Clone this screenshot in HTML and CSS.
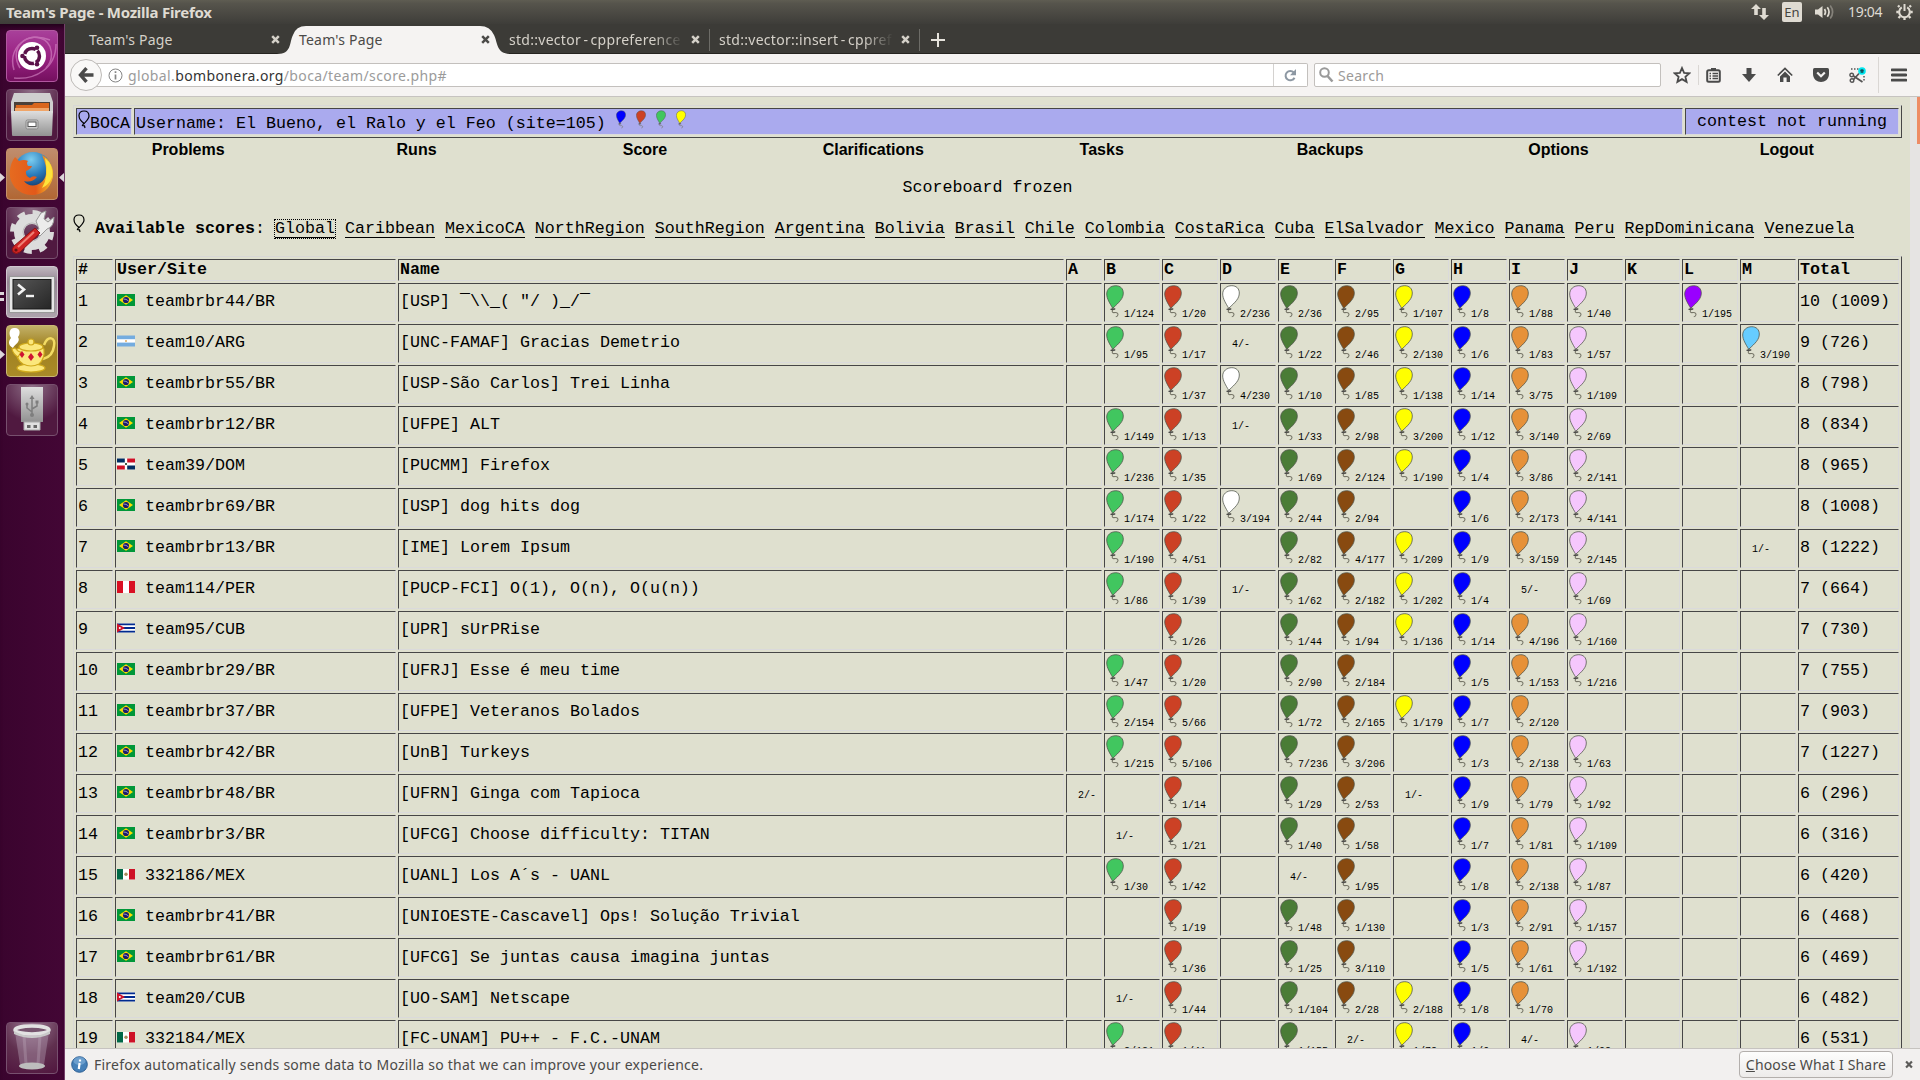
FILE: index.html
```html
<!DOCTYPE html>
<html lang="en">
<head>
<meta charset="utf-8">
<title>Team's Page</title>
<link rel="stylesheet" href="styles.css">
</head>
<body>
<svg class="defs" width="0" height="0" aria-hidden="true">
  <defs>
    <symbol id="balloon" viewBox="0 0 18 33">
      <path d="M4.8 24.9L7.2 22.9L9.4 24.3M7 24.6C5.8 26 6 27.7 7.8 27.6C10.300 27.200 12 27.700 12 29.500C12 31.100 10.800 31.600 9.800 31.800" fill="none" stroke="#777668" stroke-width="1.1"/>
      <path d="M9.8 .7C14.300 .7 17.300 3.600 17.300 8C17.300 13.500 13.500 17 6.700 23.300C4 18.500 .7 13.800 .7 9C.7 4 4.700 .7 9.800 .7Z" stroke="#4c5148" stroke-opacity=".75" stroke-width="1"/>
      <path d="M4.600 24.300H8.800" stroke="#444" stroke-width="1.200"/>
    </symbol>
    <symbol id="outline" viewBox="0 0 12 19">
      <path d="M6 1C9 1 11 3 11 6C11 9 8 11.500 6.200 13.500C4 12 1 8.500 1 5.500C1 2.500 3 1 6 1ZM5.500 13.500L4.500 15.500L6.500 15.800L7 18" fill="none" stroke="#000" stroke-width="1.200"/>
    </symbol>
    <symbol id="BR" viewBox="0 0 18 12"><path fill="#009739" d="M0 0h18v12H0z"/><path fill="#fedd00" d="M9 1.300L16 6L9 10.700L2 6Z"/><circle cx="9" cy="6" r="3.100" fill="#1c1a6b"/><path d="M6.300 5Q9 4.700 11.600 7" stroke="#c8cbe8" stroke-width=".7" fill="none"/></symbol>
    <symbol id="ARG" viewBox="0 0 18 12"><path fill="#74acdf" d="M0 .5h18v11H0z"/><path fill="#fff" d="M0 4.200h18v3.400H0z"/><path fill="#e8bf85" d="M8 5h2v2H8z"/></symbol>
    <symbol id="DOM" viewBox="0 0 18 12"><path fill="#fff" d="M0 .5h18v11H0z"/><path fill="#002d62" d="M0 .5h7.800v4H0zM10.200 7.500H18v4h-7.800z"/><path fill="#ce1126" d="M10.200 .5H18v4h-7.800zM0 7.500h7.800v4H0z"/><path fill="#3d5c46" d="M8 5h2v2H8z"/></symbol>
    <symbol id="PER" viewBox="0 0 18 12"><path fill="#fff" d="M0 0h18v12H0z"/><path fill="#d91023" d="M0 0h6v12H0zM12 0h6v12h-6z"/></symbol>
    <symbol id="CUB" viewBox="0 0 18 12"><path fill="#fff" d="M0 1.500h18v9H0z"/><path fill="#002a8f" d="M0 1.500h18v1.800H0zM0 5.100h18v1.800H0zM0 8.700h18v1.800H0z"/><path fill="#cf142b" d="M0 1.500L8 6L0 10.500Z"/><circle cx="2.800" cy="6" r="1" fill="#fff"/></symbol>
    <symbol id="MEX" viewBox="0 0 18 12"><path fill="#fff" d="M0 1h18v10.500H0z"/><path fill="#006847" d="M0 1h6v10.500H0z"/><path fill="#ce1126" d="M12 1h6v10.500h-6z"/><circle cx="9" cy="6.200" r="1.700" fill="#a88a5c"/></symbol>
    <symbol id="cross" viewBox="0 0 9 9"><path d="M1.200 1.200L7.800 7.800M7.800 1.200L1.200 7.800" stroke="currentColor" stroke-width="2.500"/></symbol>
    <linearGradient id="metal" x1="0" y1="0" x2="0" y2="1"><stop offset="0" stop-color="#dedede"/><stop offset="1" stop-color="#929292"/></linearGradient>
    <linearGradient id="dark" x1="0" y1="0" x2="1" y2="1"><stop offset="0" stop-color="#565656"/><stop offset="1" stop-color="#262626"/></linearGradient>
    <linearGradient id="fox" x1="0" y1="0" x2="1" y2="0"><stop offset="0" stop-color="#e66b20"/><stop offset=".6" stop-color="#e2591a"/><stop offset="1" stop-color="#f8c62a"/></linearGradient>
    <radialGradient id="globe" cx=".45" cy=".2" r=".8"><stop offset="0" stop-color="#7ccdf0"/><stop offset=".5" stop-color="#2a7dbd"/><stop offset="1" stop-color="#12305f"/></radialGradient>
  </defs>
</svg>

<header class="panel">
  <span class="panel-title">Team's Page - Mozilla Firefox</span>
  <div class="indicators">
    <svg width="18" height="18" viewBox="0 0 18 18" fill="#dfdbd2"><path d="M5 1L10 6H6.800V12H3.200V6H0ZM13 17L8 12H11.200V5H14.800V12H18Z"/></svg>
    <span class="lang">En</span>
    <svg width="20" height="18" viewBox="0 0 20 18" fill="none" stroke="#dfdbd2" stroke-width="1.700"><path d="M0 6.500H3L7.500 3V15L3 11.500H0Z" fill="#dfdbd2" stroke="none"/><path d="M9.500 6Q11.500 9 9.500 12M12.300 4.300Q15.800 9 12.300 13.700"/><path d="M15.200 2.500Q20 9 15.200 15.500" stroke="#85827a"/></svg>
    <span class="clock">19:04</span>
    <svg width="17" height="18" viewBox="0 0 17 18" fill="none" stroke="#dfdbd2"><path d="M5.800 4.400A5.300 5.300 0 1 0 11.200 4.400" stroke-width="2"/><path d="M8.500 1V8" stroke-width="2"/><path d="M3.500 4L2 2.500M13.500 4L15 2.500M2.800 9H.3M14.200 9H16.700M4.200 13.200L2.500 15M12.800 13.200L14.500 15M8.500 14.500V17" stroke-width="2.300"/></svg>
  </div>
</header>

<div class="desktop">
  <nav class="launcher">
    <div class="tile dash"><svg viewBox="0 0 52 52"><g fill="none" stroke="#d98cc9" stroke-width="1.500" opacity=".6"><path d="M8 40C2 20 18 4 34 8C48 12 48 30 40 38"/><path d="M44 10C20 0 2 18 14 38"/><path d="M8 48C30 50 50 38 50 14"/></g><circle cx="26" cy="26" r="14" fill="#fff"/><circle cx="26" cy="26" r="7.500" fill="none" stroke="#5b124a" stroke-width="3.400" stroke-dasharray="13.700 2" stroke-dashoffset="6"/><g fill="#5b124a"><circle cx="16.500" cy="26" r="2.300"/><circle cx="31" cy="17.800" r="2.300"/><circle cx="31" cy="34.200" r="2.300"/></g></svg></div>
    <div class="tile files"><svg viewBox="0 0 52 52"><path d="M8 4H44L47 13V24H5V13Z" fill="#cfcfcf"/><path d="M8 13H44V24H8Z" fill="#4b4039"/><path d="M10 16H26L28 14H43V24H9Z" fill="#d9661d"/><path d="M9 19H43V24H9Z" fill="#f0a568"/><path d="M5 22H47L46 46Q46 47 45 47H7Q6 47 6 46Z" fill="url(#metal)"/><rect x="20" y="31" width="12" height="9" rx="1.500" fill="#ccc" stroke="#888"/><rect x="22" y="33" width="8" height="4.500" fill="#fff" stroke="#555"/></svg></div>
    <div class="tile firefox"><svg viewBox="0 0 52 52"><circle cx="27" cy="23" r="19" fill="url(#globe)"/><path d="M4 22C5 15 7 12 9 9L13 13Q18 11 22 13Q20 15 22 18H26Q25 21 20 23Q19 28 24 30Q27 27 31 29Q26 35 18 33C23 41 38 38 40 26C41 18 38 12 36 7C44 11 48 20 47 29C44 42 35 47 26 47C12 47 2 35 4 22Z" fill="url(#fox)"/><path d="M39 10Q48 17 46 29Q43 37 36 40Q43 29 39 10Z" fill="#fde33b"/></svg></div>
    <div class="tile settings"><svg viewBox="0 0 52 52"><circle cx="26" cy="25" r="18.500" fill="none" stroke="#dadada" stroke-width="7" stroke-dasharray="7.300 7.230"/><circle cx="26" cy="25" r="13" fill="none" stroke="#dcdcdc" stroke-width="10"/><circle cx="26" cy="25" r="9" fill="none" stroke="#bbb"/><path d="M33 22L30 14L35 6L40 4L38 12L42 15L48 10Q48 20 41 22L34 29L28 24Z" fill="#ececec" stroke="#999"/><path d="M29 21L34 26L14 45Q10 48 7 45Q5 42 8 39Z" fill="#cf2424" stroke="#8d1414"/><path d="M28 25L12 40" stroke="#ef8276" stroke-width="2"/><circle cx="10" cy="43" r="1.600" fill="#611"/></svg></div>
    <div class="tile terminal"><svg viewBox="0 0 52 52"><rect x="3.500" y="10.500" width="45" height="36" fill="#e6e6e6" stroke="#999"/><rect x="7" y="13.500" width="38" height="29.500" fill="url(#dark)" stroke="#181818"/><path d="M12 18.500L18 23.500L12 28.500" fill="none" stroke="#f2f2f2" stroke-width="2.600"/><path d="M20 30H28" stroke="#f2f2f2" stroke-width="2.400"/></svg></div>
    <div class="tile lamp"><svg viewBox="0 0 52 52"><path d="M7 23C1 20 3 15 5 13C2 8 4 3 8 3C14 2 15 8 12 12C15 17 9 19 7 23Z" fill="#fff"/><g fill="#fbe77c" stroke="#d0a91c" stroke-width="1.200"><ellipse cx="25" cy="43" rx="14" ry="4"/><path d="M38 20C42 10 50 12 48 21C47 30 41 33 37 34" fill="none" stroke="#f2db63" stroke-width="2.500"/><path d="M11 24Q9 34 17 39Q25 43 33 39Q39 34 38 24Q25 17 11 24Z"/><path d="M12 32Q7 29 6 24L9 23Q12 27 15 27Z"/><ellipse cx="25" cy="22" rx="12" ry="4"/><circle cx="25" cy="17" r="3"/></g><g fill="#cf1432"><path d="M16 26L18.500 29.500L16 33L13.500 29.500Z"/><path d="M25 28L28 32L25 36L22 32Z"/><path d="M34 26L36.500 29.500L34 33L31.500 29.500Z"/></g></svg></div>
    <div class="tile usb"><svg viewBox="0 0 52 52"><path d="M15 3H37V38H15Z" fill="url(#metal)"/><path d="M18 38H34V46H18Z" fill="#e1e1e1" stroke="#aaa"/><path d="M21 41h3.500v3H21zM27.500 41H31v3H27.500z" fill="#666"/><g fill="none" stroke="#7e7e7e" stroke-width="1.500"><path d="M26 14V31M26 28L21 24V20M26 25L31 22V18"/></g><path d="M26 11L28.500 15H23.500Z" fill="#7e7e7e"/><circle cx="26" cy="31" r="2" fill="#7e7e7e"/><circle cx="21" cy="20" r="1.500" fill="#7e7e7e"/><path d="M29.500 16.500h3v3h-3z" fill="#7e7e7e"/></svg></div>
    <div class="tile trash"><svg viewBox="0 0 52 52"><path d="M9 10L14 43Q26 49 38 43L43 10Z" fill="#b9a5b8" opacity=".4"/><path d="M18 14L20 42M34 14L32 42" stroke="#cfc2cf" stroke-width="3" opacity=".25"/><ellipse cx="26" cy="44" rx="13" ry="3.500" fill="#bdbdbd"/><ellipse cx="26" cy="8" rx="17" ry="4" fill="#77556f" stroke="#e2e2e2" stroke-width="3.500"/><path d="M8 9Q26 19 44 9V12Q26 20 8 12Z" fill="#c9c9c9"/></svg></div>
  </nav>

  <main class="window">
    <div class="tabs">
      <div class="tab"><span>Team's Page</span><svg class="close"><use href="#cross"/></svg></div>
      <div class="tab active">
        <svg class="shape" width="234" height="28" viewBox="0 0 234 28"><path d="M0 28C15 28 12 17 16 9Q19 0 29 0H203Q213 0 217 9C221 17 219 28 234 28Z" fill="#f5f3f2"/></svg>
        <span>Team's Page</span><svg class="close"><use href="#cross"/></svg></div>
      <div class="tab ruled"><span class="fade">std::vector - cppreference</span><svg class="close"><use href="#cross"/></svg></div>
      <div class="tab ruled"><span class="fade">std::vector::insert - cppref</span><svg class="close"><use href="#cross"/></svg></div>
      <svg class="plus" width="14" height="14" viewBox="0 0 14 14"><path d="M7 0V14M0 7H14" stroke="#e6e3dc" stroke-width="2"/></svg>
    </div>

    <div class="toolbar">
      <div class="back"><svg width="16" height="16" viewBox="0 0 16 16" fill="none" stroke="#4a4a4a" stroke-width="3.400"><path d="M8.500 1.200L2.500 8L8.500 14.800M2.500 8H15.500"/></svg></div>
      <div class="url">
        <svg width="15" height="15" viewBox="0 0 15 15" fill="none" stroke="#858585"><circle cx="7.500" cy="7.500" r="6.500"/><path d="M7.500 3.300V5M7.500 6.500V11.500" stroke-width="1.700"/></svg>
        <span class="address">global.<b>bombonera.org</b>/boca/team/score.php#</span>
        <span class="reload"><svg width="13" height="13" viewBox="0 0 13 13" fill="none"><path d="M9.800 3.500A4.700 4.700 0 1 0 10.500 8.700" stroke="#8d98a3" stroke-width="2"/><path d="M12 0V6.200H6Z" fill="#8d98a3"/></svg></span>
      </div>
      <div class="search"><svg width="15" height="16" viewBox="0 0 15 16" fill="none" stroke="#9a9a9a"><circle cx="5.500" cy="5.500" r="4.300" stroke-width="2"/><path d="M8.500 9L13.500 14.500" stroke-width="2.600"/></svg><span>Search</span></div>
      <div class="tools">
        <svg width="18" height="18" viewBox="0 0 18 18"><path d="M9 2L11.100 6.800L16.300 7.300L12.400 10.700L13.600 15.800L9 13.100L4.400 15.800L5.600 10.700L1.700 7.300L6.900 6.800Z" fill="none" stroke="#4a4a4a" stroke-width="1.800"/></svg>
        <i class="rule small"></i>
        <svg class="clip" width="15" height="16" viewBox="0 0 15 16"><path d="M5 3V1H10V3" fill="#4a4a4a"/><rect x="1.200" y="3.200" width="12.600" height="11.600" rx="1.500" fill="none" stroke="#4a4a4a" stroke-width="2"/><path d="M3.500 6.500H5M6.500 6.500H12M3.500 9H5M6.500 9H12M3.500 11.500H5M6.500 11.500H12" stroke="#4a4a4a" stroke-width="1.300"/></svg>
        <svg width="16" height="16" viewBox="0 0 16 16"><path d="M5.500 1H10.500V7H15L8 15L1 7H5.500Z" fill="#4a4a4a"/></svg>
        <svg width="16" height="16" viewBox="0 0 16 16"><path d="M.8 8.500L8 1.500L15.200 8.500" fill="none" stroke="#4a4a4a" stroke-width="1.700"/><path d="M3 9.500L8 4.600L13 9.500V15H9.600V10.500H6.400V15H3Z" fill="#4a4a4a"/></svg>
        <svg width="16" height="16" viewBox="0 0 16 16"><path d="M1.500 1H14.500Q16 1 16 2.500V7C16 12 12 15 8 15S0 12 0 7V2.500Q0 1 1.500 1Z" fill="#4a4a4a"/><path d="M4.200 5.500L8 9.200L11.800 5.500" fill="none" stroke="#f4f2f1" stroke-width="2.200"/></svg>
        <svg width="17" height="17" viewBox="0 0 17 17" fill="none"><path d="M2 2H11M15 9V14" stroke="#555" stroke-width="1.500" stroke-dasharray="1.500 1.500"/><circle cx="2.700" cy="8" r="1.800" stroke="#555" stroke-width="1.400"/><circle cx="3" cy="13.500" r="1.800" stroke="#555" stroke-width="1.400"/><path d="M4.500 9L13.500 15M4.500 12.500L10 6.500" stroke="#555" stroke-width="1.800"/><circle cx="13" cy="4" r="3.800" fill="#00e8f0"/><path d="M13 2V6M11.300 3L14.700 5M14.700 3L11.300 5" stroke="#134a55" stroke-width="1.200"/></svg>
        <i class="rule"></i>
        <svg width="16" height="14" viewBox="0 0 16 14"><path d="M1 1.800H15M1 7H15M1 12.200H15" stroke="#4a4a4a" stroke-width="2.800" stroke-linecap="round"/></svg>
      </div>
    </div>

    <div class="viewport">
      <div class="page">
        <div class="banner">
          <div class="cell brand"><svg width="12" height="19"><use href="#outline"/></svg>BOCA</div>
          <div class="cell user">Username: El Bueno, el Ralo y el Feo (site=105)<span class="won"><svg fill="#0000ff"><use href="#balloon"/></svg><svg fill="#cc4125"><use href="#balloon"/></svg><svg fill="#41c65f"><use href="#balloon"/></svg><svg fill="#ffff00"><use href="#balloon"/></svg></span></div>
          <div class="cell status">contest not running</div>
        </div>
        <nav class="menu"><a>Problems</a><a>Runs</a><a>Score</a><a>Clarifications</a><a>Tasks</a><a>Backups</a><a>Options</a><a>Logout</a></nav>
        <p class="frozen">Scoreboard frozen</p>
        <div class="scores"><svg width="12" height="19"><use href="#outline"/></svg><span><b>Available scores</b>:</span><a class="current">Global</a><a>Caribbean</a><a>MexicoCA</a><a>NorthRegion</a><a>SouthRegion</a><a>Argentina</a><a>Bolivia</a><a>Brasil</a><a>Chile</a><a>Colombia</a><a>CostaRica</a><a>Cuba</a><a>ElSalvador</a><a>Mexico</a><a>Panama</a><a>Peru</a><a>RepDominicana</a><a>Venezuela</a></div>
        <div class="board" id="board"></div>
      </div>
      <div class="scrollbar"><div class="thumb"></div></div>
    </div>

    <footer class="notice">
      <svg width="17" height="17" viewBox="0 0 17 17"><circle cx="8.500" cy="8.500" r="7.800" fill="#4580b8" stroke="#2d5f94"/><ellipse cx="8.500" cy="5" rx="6" ry="4" fill="#86b2da" opacity=".6"/><path d="M9 3.500V5.500M8.600 7L7.800 13" stroke="#fff" stroke-width="2.200"/></svg>
      <span class="message">Firefox automatically sends some data to Mozilla so that we can improve your experience.</span>
      <button><u>C</u>hoose What I Share</button>
      <svg class="close"><use href="#cross"/></svg>
    </footer>
  </main>
  <svg class="pips" width="64" height="420" viewBox="0 0 64 420" fill="#dcd6da"><path d="M0 145L5 149.500L0 154ZM64 145L59 149.500L64 154ZM0 264H4V267H0ZM0 270H4V273H0ZM0 322L5 326.500L0 331Z"/></svg>
</div>
<script src="board.js"></script>
</body>
</html>
```
FILE: styles.css
```css
* { box-sizing: border-box; }
body {
  margin: 0;
  width: 1920px;
  height: 1080px;
  overflow: hidden;
  display: flex;
  flex-direction: column;
  font-family: "Noto Sans", sans-serif;
  font-size: 14px;
}
svg { display: block; flex: none; }
.defs { position: absolute; }

.panel {
  height: 24px;
  flex: none;
  display: flex;
  justify-content: space-between;
  padding: 0 7px 0 6px;
  background: linear-gradient(#5f5d52, #56544c 15%, #3e3d39);
  color: #dfdbd2;
  line-height: 24px;
}
.panel-title { font-weight: bold; font-size: 15px; letter-spacing: -.25px; }
.indicators { display: flex; align-items: center; }
.lang {
  margin: 0 13px 0 13px;
  width: 20px;
  height: 20px;
  border-radius: 2px;
  background: #dfdbd2;
  color: #45443f;
  font-size: 13px;
  line-height: 21px;
  text-align: center;
}
.clock { margin: 0 12px 0 13px; width: 36px; white-space: nowrap; letter-spacing: -.3px; }

.desktop { flex: 1; min-height: 0; display: flex; position: relative; }
.launcher {
  width: 65px;
  flex: none;
  display: flex;
  flex-direction: column;
  gap: 7px;
  padding: 6px 6px 6px;
  background: linear-gradient(90deg, #3a042e, #430635);
  border-right: 1px solid #75406a;
  box-shadow: inset 0 6px 5px -3px #22021b;
}
.tile {
  width: 52px;
  height: 52px;
  flex: none;
  border-radius: 4px;
  border: 1px solid #77506e;
  background: radial-gradient(circle at 50% 0, #9b7a94, #60304f 55%, #51163f);
}
.tile svg { width: 52px; height: 52px; margin: -1px; }
.dash { background: linear-gradient(#a8409a, #9a2283 50%, #75105f); border-color: #b157a0; }
.firefox { background: linear-gradient(#c08d6d, #b16734); border-color: #c3906a; }
.terminal { background: linear-gradient(#bfb6be, #958493 30%, #ada2ac); border-color: #cfc6ce; }
.lamp { background: linear-gradient(#c2b068, #a08220 40%, #a98a28); border-color: #c9b774; }
.files, .settings, .usb { background: radial-gradient(circle at 50% 0, #8f7088, #501940 65%); }
.trash { margin-top: auto; }
.pips { position: absolute; left: 0; top: 4px; }

.window { flex: 1; min-width: 0; display: flex; flex-direction: column; }
.tabs {
  height: 30px;
  flex: none;
  display: flex;
  padding-left: 15px;
  background: #3c3b37;
  border-bottom: 1px solid #252420;
  color: #d5d1c9;
}
.tab {
  position: relative;
  width: 210px;
  height: 31px;
  display: flex;
  align-items: center;
  justify-content: space-between;
  padding: 0 10px 0 9px;
  line-height: 32px;
  white-space: nowrap;
  letter-spacing: .2px;
}
.tab > span { position: relative; }
.tab .fade { width: 174px; letter-spacing: .28px; word-spacing: -1.500px; mask-image: linear-gradient(90deg, #000 83%, transparent); }
.tab.active { color: #4b4a48; }
.tab.ruled::after {
  content: "";
  position: absolute;
  right: 0;
  top: 5px;
  height: 22px;
  width: 1px;
  background: #6d6c67;
}
.shape { position: absolute; left: -13px; top: 2px; }
.close { position: relative; width: 9px; height: 9px; }
.plus { margin: 9px 0 0 11px; }

.toolbar {
  height: 43px;
  flex: none;
  display: flex;
  align-items: center;
  padding-left: 5px;
  background: #f5f3f2;
  border-bottom: 1px solid #c6c3c0;
}
.back {
  width: 32px;
  height: 32px;
  flex: none;
  border: 1px solid #bdbab7;
  border-radius: 50%;
  background: #f9f8f7;
  display: grid;
  place-items: center;
  position: relative;
}
.url {
  width: 1214px;
  height: 24px;
  flex: none;
  margin-left: -8px;
  padding-left: 14px;
  display: flex;
  align-items: center;
  background: #fff;
  border: 1px solid #c3c0bd;
  border-left: 0;
  border-radius: 0 2px 2px 0;
}
.address { margin-left: 5px; color: #9b9b9b; letter-spacing: .38px; }
.address b { font-weight: normal; color: #333; }
.reload {
  margin-left: auto;
  width: 34px;
  height: 22px;
  border-left: 1px solid #d4d2d0;
  display: grid;
  place-items: center;
}
.search {
  width: 347px;
  height: 24px;
  flex: none;
  margin-left: 6px;
  padding-left: 4px;
  display: flex;
  align-items: center;
  gap: 4px;
  background: #fff;
  border: 1px solid #c3c0bd;
  border-radius: 2px;
  color: #9c9a98;
  letter-spacing: .3px;
}
.tools { display: flex; align-items: center; gap: 20px; padding-left: 12px; }
.rule { width: 1px; height: 36px; background: #dad7d4; margin: 0 -8px; }
.rule.small { height: 20px; margin: 0 -13px; }

.viewport { flex: 1; min-height: 0; display: flex; overflow: hidden; background: #dfe0cf; }
.page {
  flex: 1;
  min-width: 0;
  padding: 8px 8px 0;
  font-family: "Liberation Mono", monospace;
  font-size: 16.664px;
  line-height: 19px;
  color: #000;
}
.scrollbar { width: 10px; flex: none; background: #e6e4e3; display: flex; justify-content: flex-end; }
.thumb { width: 3px; height: 47px; background: #ee8c66; }

.cell {
  border: 1px solid;
  border-color: #464646 #dadadb #dadadb #464646;
  white-space: pre;
}
.banner, .board {
  display: grid;
  gap: 2px;
  padding: 2px;
  width: 1829px;
  border: 1px solid;
  border-color: #d8d8d6 #464646 #464646 #d8d8d6;
}
.banner { grid-template: 27px / 56px 1549px 214px; height: 33px; }
.banner .cell { background: #aaaaee; display: flex; padding-left: 1px; line-height: 30px; }
.brand svg { margin: 1px 0 0; }
.won { display: flex; margin-left: 10px; padding-top: 1px; gap: 10px; }
.won svg { width: 10px; height: 19px; }
.banner .status { padding-left: 11px; line-height: 26px; }

.menu {
  display: grid;
  grid-template-columns: repeat(8, 1fr);
  width: 1827px;
  margin-left: 1px;
  padding-top: 1px;
  font: bold 16px/22px "Liberation Sans", sans-serif;
  text-align: center;
}
.frozen { margin: 17px 0 0; text-align: center; width: 1829px; }
.scores { display: flex; gap: 10px; margin: 18px 0 17px; height: 24px; }
.scores > svg { margin-top: -1px; }
.scores > span { margin-top: 4px; }
.scores > a { height: 18px; margin-top: 5px; line-height: 17px; border-bottom: 1px solid #000; }
.scores .current { outline: 1px dotted #000; }

.board {
  grid-template-columns: 37px 281px 666px 36px 56px 56px 56px 55px 56px 56px 56px 56px 56px 55px 56px 56px 101px;
  grid-template-rows: 22px;
  grid-auto-rows: 38.965px;
}
.board .cell { padding: .3px 1px 0; line-height: 36px; }
.board .head { padding-top: 0; font-weight: bold; line-height: 20px; }
.board .flag { display: inline-block; width: 18px; height: 12px; margin-right: 10px; vertical-align: baseline; }
.board .problem { display: flex; padding-top: 0; font-size: 10px; line-height: 12px; }
.problem svg { width: 18px; height: 33px; margin-top: 1px; }
.problem span { align-self: flex-end; }
.problem .tried { align-self: center; margin: 3.500px 0 0 10px; }

.notice {
  height: 32px;
  flex: none;
  position: relative;
  display: flex;
  align-items: center;
  padding: 0 7px 0 6px;
  background: #f2f0ef;
  border-top: 1px solid #c6c3c0;
  color: #4b4a48;
}
.message { margin-left: 6px; white-space: nowrap; letter-spacing: .237px; }
.notice button {
  margin-left: auto;
  width: 154px;
  height: 27px;
  padding: 0;
  border: 1px solid #b3afac;
  border-radius: 4px;
  background: linear-gradient(#fdfdfc, #edebea);
  font: inherit;
  color: #4b4a48;
  white-space: nowrap;
  letter-spacing: .18px;
}
.notice .close { margin-left: 12px; color: #5c5b59; width: 8px; }
```
FILE: board.js
```js
const problems = 'ABCDEFGHIJKLM';
const colors = {
  B: '#41c65f', C: '#cc4125', D: '#ffffff', E: '#4a7c36', F: '#884a10', G: '#ffff00',
  H: '#0000ff', I: '#e69138', J: '#f5c7fd', L: '#9900ff', M: '#66ccff'
};
// [user/site, name, attempts by problem, total]
const teams = [
  ['teambrbr44/BR', '[USP] ¯\\\\_( "/ )_/¯', 'B1/124 C1/20 D2/236 E2/36 F2/95 G1/107 H1/8 I1/88 J1/40 L1/195', '10 (1009)'],
  ['team10/ARG', '[UNC-FAMAF] Gracias Demetrio', 'B1/95 C1/17 D4/- E1/22 F2/46 G2/130 H1/6 I1/83 J1/57 M3/190', '9 (726)'],
  ['teambrbr55/BR', '[USP-São Carlos] Trei Linha', 'C1/37 D4/230 E1/10 F1/85 G1/138 H1/14 I3/75 J1/109', '8 (798)'],
  ['teambrbr12/BR', '[UFPE] ALT', 'B1/149 C1/13 D1/- E1/33 F2/98 G3/200 H1/12 I3/140 J2/69', '8 (834)'],
  ['team39/DOM', '[PUCMM] Firefox', 'B1/236 C1/35 E1/69 F2/124 G1/190 H1/4 I3/86 J2/141', '8 (965)'],
  ['teambrbr69/BR', '[USP] dog hits dog', 'B1/174 C1/22 D3/194 E2/44 F2/94 H1/6 I2/173 J4/141', '8 (1008)'],
  ['teambrbr13/BR', '[IME] Lorem Ipsum', 'B1/190 C4/51 E2/82 F4/177 G1/209 H1/9 I3/159 J2/145 M1/-', '8 (1222)'],
  ['team114/PER', '[PUCP-FCI] O(1), O(n), O(u(n))', 'B1/86 C1/39 D1/- E1/62 F2/182 G1/202 H1/4 I5/- J1/69', '7 (664)'],
  ['team95/CUB', '[UPR] sUrPRise', 'C1/26 E1/44 F1/94 G1/136 H1/14 I4/196 J1/160', '7 (730)'],
  ['teambrbr29/BR', '[UFRJ] Esse é meu time', 'B1/47 C1/20 E2/90 F2/184 H1/5 I1/153 J1/216', '7 (755)'],
  ['teambrbr37/BR', '[UFPE] Veteranos Bolados', 'B2/154 C5/66 E1/72 F2/165 G1/179 H1/7 I2/120', '7 (903)'],
  ['teambrbr42/BR', '[UnB] Turkeys', 'B1/215 C5/106 E7/236 F3/206 H1/3 I2/138 J1/63', '7 (1227)'],
  ['teambrbr48/BR', '[UFRN] Ginga com Tapioca', 'A2/- C1/14 E1/29 F2/53 G1/- H1/9 I1/79 J1/92', '6 (296)'],
  ['teambrbr3/BR', '[UFCG] Choose difficulty: TITAN', 'B1/- C1/21 E1/40 F1/58 H1/7 I1/81 J1/109', '6 (316)'],
  ['332186/MEX', '[UANL] Los A´s - UANL', 'B1/30 C1/42 E4/- F1/95 H1/8 I2/138 J1/87', '6 (420)'],
  ['teambrbr41/BR', '[UNIOESTE-Cascavel] Ops! Solução Trivial', 'C1/19 E1/48 F1/130 H1/3 I2/91 J1/157', '6 (468)'],
  ['teambrbr61/BR', '[UFCG] Se juntas causa imagina juntas', 'C1/36 E1/25 F3/110 H1/5 I1/61 J1/192', '6 (469)'],
  ['team20/CUB', '[UO-SAM] Netscape', 'B1/- C1/44 E1/104 F2/28 G2/188 H1/8 I1/70', '6 (482)'],
  ['332184/MEX', '[FC-UNAM] PU++ - F.C.-UNAM', 'B2/131 C1/41 E1/155 F2/- G1/78 H1/6 I4/- J1/98', '6 (531)']
];

const cell = (kind, content) => `<div class="cell ${kind}">${content}</div>`;

function problemCell(letter, results) {
  const score = results[letter];
  if (!score) return cell('problem', '');
  if (score.endsWith('-')) return cell('problem', `<span class="tried">${score}</span>`);
  return cell('problem', `<svg fill="${colors[letter]}"><use href="#balloon"/></svg><span>${score}</span>`);
}

let html = ['#', 'User/Site', 'Name', ...problems, 'Total'].map(t => cell('head', t)).join('');
teams.forEach(([user, name, scores, total], i) => {
  const results = Object.fromEntries(scores.split(' ').map(s => [s[0], s.slice(1)]));
  html += cell('rank', i + 1)
    + cell('team', `<svg class="flag"><use href="#${user.split('/')[1]}"/></svg>${user}`)
    + cell('name', name)
    + [...problems].map(p => problemCell(p, results)).join('')
    + cell('total', total);
});
document.getElementById('board').innerHTML = html;
```
